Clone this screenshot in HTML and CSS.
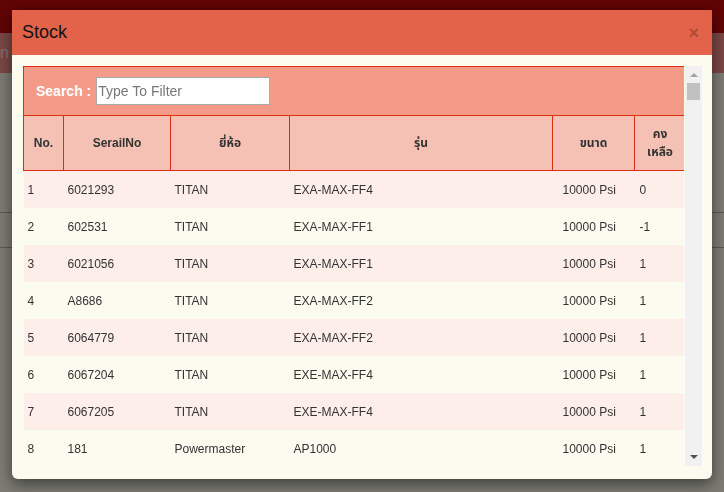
FILE: index.html
```html
<!DOCTYPE html>
<html lang="th">
<head>
<meta charset="utf-8">
<title>Stock</title>
<link rel="stylesheet" href="styles.css">
</head>
<body>
<div class="page">
  <div class="navbar"></div>
  <div class="subbar"><span class="subtext">n Control</span></div>
  <div class="panel">
    <div class="panel-line"></div>
    <div class="panel-line"></div>
  </div>
</div>

<div class="backdrop">
  <div class="modal">
    <div class="modal-header">
      <h4 class="modal-title">Stock</h4>
      <span class="close">&times;</span>
    </div>
    <div class="modal-body">
      <div class="scroll-area">
        <div class="table-wrap">
          <table class="stock-table">
            <colgroup>
              <col class="c-no"><col class="c-serial"><col class="c-brand"><col class="c-model"><col class="c-size"><col class="c-left">
            </colgroup>
            <thead>
              <tr class="search-row">
                <th colspan="6">
                  <div class="search">
                    <label class="search-label">Search :</label>
                    <input class="search-input" type="text" placeholder="Type To Filter">
                  </div>
                </th>
              </tr>
              <tr class="head-row">
                <th>No.</th>
                <th>SerailNo</th>
                <th>ยี่ห้อ</th>
                <th>รุ่น</th>
                <th>ขนาด</th>
                <th>คง<br>เหลือ</th>
              </tr>
            </thead>
            <tbody>
              <tr class="odd"><td>1</td><td>6021293</td><td>TITAN</td><td>EXA-MAX-FF4</td><td class="size">10000 Psi</td><td>0</td></tr>
              <tr class="even"><td>2</td><td>602531</td><td>TITAN</td><td>EXA-MAX-FF1</td><td class="size">10000 Psi</td><td>-1</td></tr>
              <tr class="odd"><td>3</td><td>6021056</td><td>TITAN</td><td>EXA-MAX-FF1</td><td class="size">10000 Psi</td><td>1</td></tr>
              <tr class="even"><td>4</td><td>A8686</td><td>TITAN</td><td>EXA-MAX-FF2</td><td class="size">10000 Psi</td><td>1</td></tr>
              <tr class="odd"><td>5</td><td>6064779</td><td>TITAN</td><td>EXA-MAX-FF2</td><td class="size">10000 Psi</td><td>1</td></tr>
              <tr class="even"><td>6</td><td>6067204</td><td>TITAN</td><td>EXE-MAX-FF4</td><td class="size">10000 Psi</td><td>1</td></tr>
              <tr class="odd"><td>7</td><td>6067205</td><td>TITAN</td><td>EXE-MAX-FF4</td><td class="size">10000 Psi</td><td>1</td></tr>
              <tr class="even"><td>8</td><td>181</td><td>Powermaster</td><td>AP1000</td><td class="size">10000 Psi</td><td>1</td></tr>
            </tbody>
          </table>
        </div>
        <div class="scrollbar">
          <span class="arrow-up"></span>
          <span class="thumb"></span>
          <span class="track-fill"></span>
          <span class="arrow-down"></span>
        </div>
      </div>
    </div>
  </div>
</div>
</body>
</html>
```

FILE: styles.css
```css
html, body {
  margin: 0;
  padding: 0;
}
body {
  width: 724px;
  height: 492px;
  overflow: hidden;
  background: #f8f8e8;
  font-family: "Liberation Sans", "Noto Sans Thai", "Noto Sans", sans-serif;
  font-size: 12px;
  color: #333;
}

/* page behind the modal */
.page {
  display: flex;
  flex-direction: column;
}
.navbar {
  height: 33px;
  background: #c20808;
}
.subbar {
  height: 40px;
  background: #f48e8c;
  display: flex;
  align-items: center;
}
.subtext {
  font-size: 16px;
  color: #fde0df;
  white-space: nowrap;
}
.panel {
  display: flex;
  flex-direction: column;
  padding-top: 139px;
}
.panel-line {
  height: 1px;
  background: #b0b0a8;
  margin-bottom: 34px;
}

/* backdrop and modal */
.backdrop {
  position: fixed;
  inset: 0;
  background: rgba(0, 0, 0, 0.5);
  padding: 10px 12px;
}
.modal {
  width: 700px;
  background: #fbfbf0;
  border-radius: 0 0 6px 6px;
  box-shadow: 0 5px 15px rgba(0, 0, 0, 0.5);
  overflow: hidden;
}
.modal-header {
  height: 45px;
  background: #e2634a;
  display: flex;
  align-items: center;
  justify-content: space-between;
  padding: 0 13px 0 10px;
  box-sizing: border-box;
}
.modal-title {
  margin: 0 0 2px;
  font-size: 18px;
  font-weight: normal;
  color: #111;
  line-height: 20px;
}
.close {
  font-size: 18px;
  font-weight: bold;
  line-height: 1;
  color: #b24a35;
}
.modal-body {
  padding: 11px 10px 13px 11px;
}
.scroll-area {
  height: 400px;
  display: flex;
  overflow: hidden;
}
.table-wrap {
  width: 662px;
  overflow: hidden;
}

/* table */
.stock-table {
  width: 662px;
  table-layout: fixed;
  border-collapse: collapse;
}
.c-no { width: 40px; }
.c-serial { width: 107px; }
.c-brand { width: 119px; }
.c-model { width: 263px; }
.c-size { width: 82px; }
.c-left { width: 51px; }

.search-row th {
  height: 48px;
  background: #f39a88;
  border: 1px solid #d9300f;
  padding: 0 0 0 12px;
  text-align: left;
}
.search {
  display: flex;
  align-items: center;
  gap: 5px;
}
.search-label {
  font-size: 14px;
  font-weight: bold;
  color: #fff;
}
.search-input {
  width: 174px;
  height: 28px;
  box-sizing: border-box;
  border: 1px solid #a9a9a9;
  padding: 0 1px;
  font-family: "Liberation Sans", sans-serif;
  font-size: 14px;
  color: #333;
  background: #fff;
  outline: none;
}
.search-input::placeholder {
  color: #777;
}
.head-row th {
  height: 54px;
  background: #f5c1b4;
  border: 1px solid #d9300f;
  font-weight: bold;
  font-size: 12px;
  color: #333;
  text-align: center;
  vertical-align: middle;
  padding: 0 4px;
  line-height: 18px;
}
tbody td {
  height: 37px;
  padding: 0 4px;
  vertical-align: middle;
  white-space: nowrap;
  color: #333;
}
tbody td.size {
  padding-left: 10px;
}
tbody td:last-child {
  padding-left: 5px;
}
tr.odd td {
  background: #fdeeea;
}
tr.even td {
  background: #fbfbf0;
}

/* scrollbar */
.scrollbar {
  width: 17px;
  margin-left: 1px;
  background: #f1f1f1;
  display: flex;
  flex-direction: column;
  align-items: center;
}
.arrow-up {
  margin-top: 7px;
  width: 0;
  height: 0;
  border-left: 4px solid transparent;
  border-right: 4px solid transparent;
  border-bottom: 4px solid #a3a3a3;
}
.thumb {
  margin-top: 6px;
  width: 13px;
  height: 17px;
  background: #c1c1c1;
}
.track-fill {
  flex: 1;
}
.arrow-down {
  margin-bottom: 7px;
  width: 0;
  height: 0;
  border-left: 4px solid transparent;
  border-right: 4px solid transparent;
  border-top: 4px solid #505050;
}
```
